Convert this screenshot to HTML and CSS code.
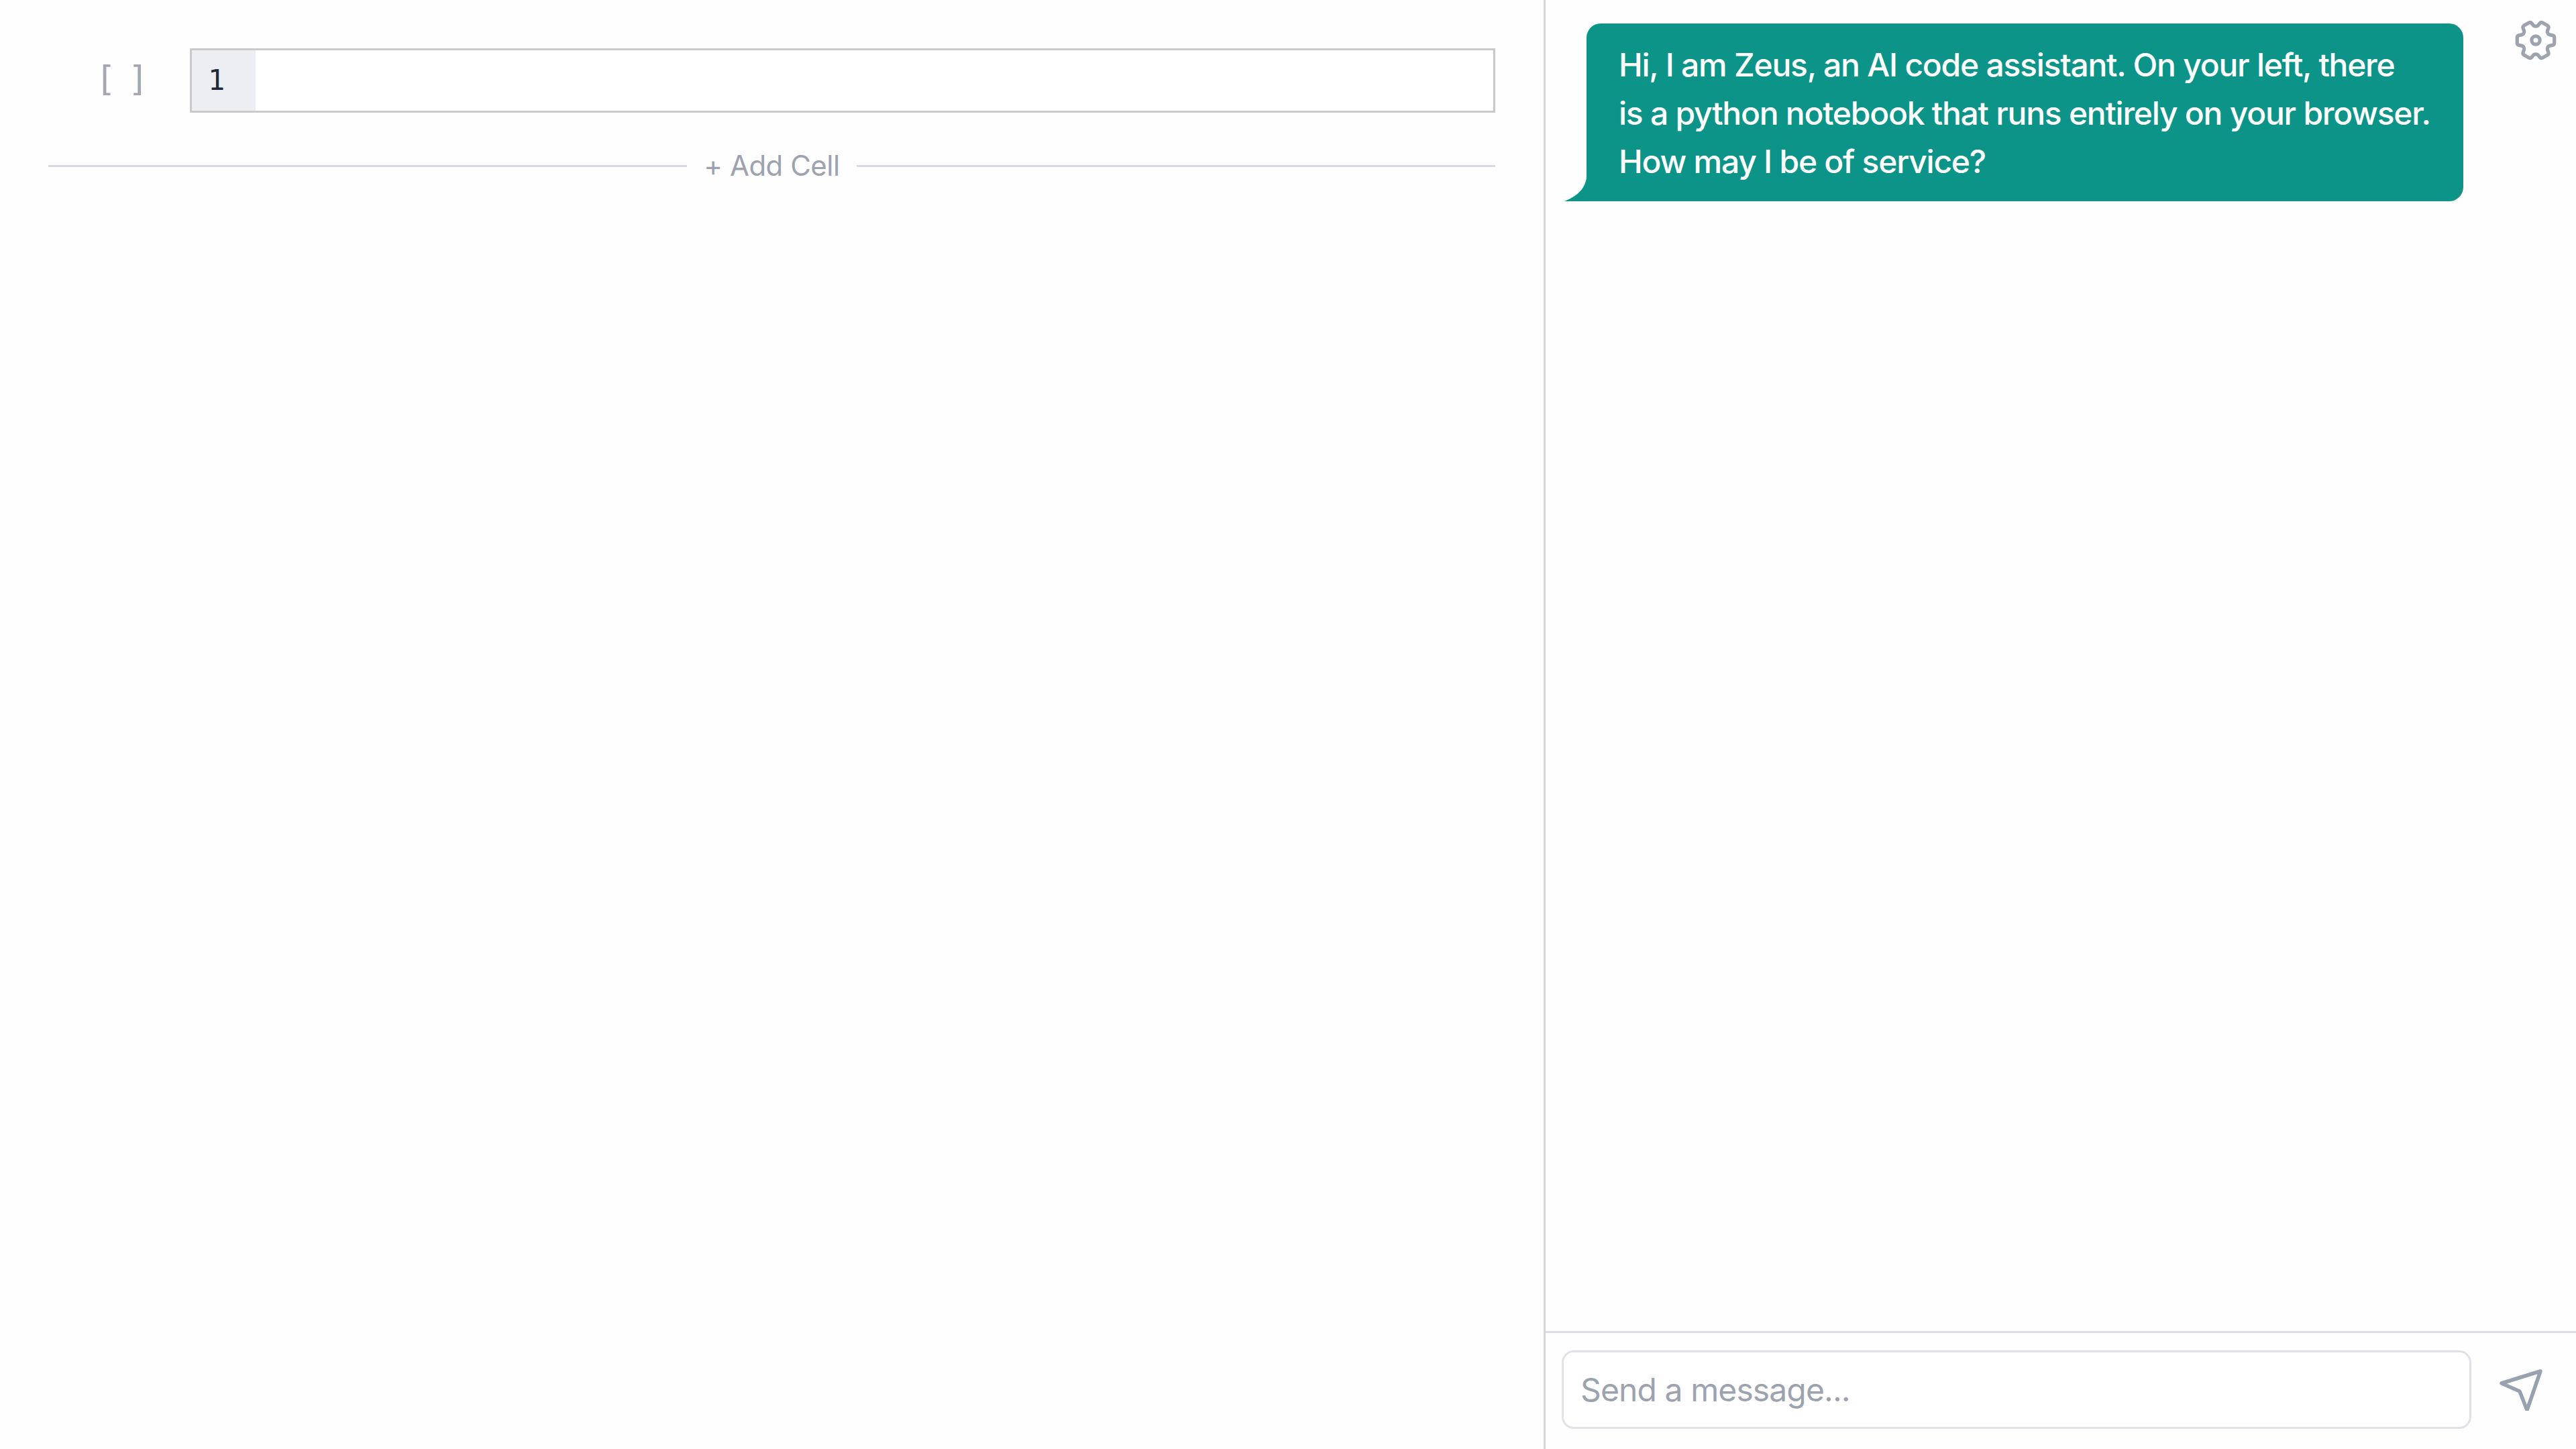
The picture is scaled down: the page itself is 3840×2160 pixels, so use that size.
FILE: index.html
```html
<!doctype html>
<html>
<head>
  <meta charset="utf-8">
  <title>Zeus</title>
  <link rel="stylesheet" href="styles.css">
</head>
<body>
  <div class="notebook">
    <div class="cell">
      <div class="prompt">[ ]</div>
      <div class="editor">
        <div class="gutter">1</div>
        <div class="code"></div>
      </div>
    </div>
    <div class="addCell">
      <div class="rule"></div>
      <span class="addLabel">+ Add Cell</span>
      <div class="rule"></div>
    </div>
  </div>

  <div class="chat">
    <div class="messages">
      <div class="bubble">
        <svg class="tail" viewBox="0 0 34 42"><path d="M34 0C33 17 26 32 0 42H34Z"/></svg>
        Hi, I am Zeus, an AI code assistant. On your left, there<br>
        is a python notebook that runs entirely on your browser.<br>
        How may I be of service?
      </div>
      <svg class="gear" viewBox="0 0 24 24" fill="none" stroke="currentColor" stroke-width="1.7" stroke-linecap="round" stroke-linejoin="round">
        <g transform="rotate(90 12 12)">
          <path d="M9.594 3.94c.09-.542.56-.94 1.11-.94h2.593c.55 0 1.02.398 1.11.94l.213 1.281c.063.374.313.686.645.87.074.04.147.083.22.127.324.196.72.257 1.075.124l1.217-.456a1.125 1.125 0 011.37.49l1.296 2.247a1.125 1.125 0 01-.26 1.431l-1.003.827c-.293.24-.438.613-.431.992a6.759 6.759 0 010 .255c-.007.378.138.75.43.99l1.005.828c.424.35.534.954.26 1.43l-1.298 2.247a1.125 1.125 0 01-1.369.491l-1.217-.456c-.355-.133-.75-.072-1.076.124a6.57 6.57 0 01-.22.128c-.331.183-.581.495-.644.869l-.213 1.28c-.09.543-.56.941-1.11.941h-2.594c-.55 0-1.02-.398-1.11-.94l-.213-1.281c-.062-.374-.312-.686-.644-.87a6.52 6.52 0 01-.22-.127c-.325-.196-.72-.257-1.076-.124l-1.217.456a1.125 1.125 0 01-1.369-.49l-1.297-2.247a1.125 1.125 0 01.26-1.431l1.004-.827c.292-.24.437-.613.43-.992a6.932 6.932 0 010-.255c.007-.378-.138-.75-.43-.99l-1.004-.828a1.125 1.125 0 01-.26-1.43l1.297-2.247a1.125 1.125 0 011.37-.491l1.216.456c.356.133.751.072 1.076-.124.072-.044.146-.087.22-.128.332-.183.582-.495.644-.869l.214-1.281z"/>
          <circle cx="12" cy="12" r="2"/>
        </g>
      </svg>
    </div>
    <div class="composer">
      <input class="messageInput" type="text" placeholder="Send a message...">
      <svg class="send" viewBox="0 0 64 64" fill="none" stroke="currentColor" stroke-width="5.5" stroke-linejoin="round" stroke-linecap="round">
        <path d="M3 23L61 5L41 63L30 35Z"/>
      </svg>
    </div>
  </div>
</body>
</html>
```
FILE: styles.css
```css
html, body {
  height: 100%;
}
body {
  margin: 0;
  display: flex;
  background: #fefefe;
  font-family: Inter, "Liberation Sans", sans-serif;
  overflow: hidden;
}

/* notebook side */
.notebook {
  width: 2304px;
  box-sizing: border-box;
  padding: 72px 72px 0 72px;
  border-right: 3px solid #d4d5d8;
}
.cell {
  display: flex;
}
.prompt {
  width: 211px;
  padding: 18px 0 0 70px;
  box-sizing: border-box;
  font-family: "DejaVu Sans Mono", monospace;
  font-size: 52px;
  line-height: 54px;
  letter-spacing: -7px;
  color: #a3a9b4;
}
.editor {
  flex: 1;
  display: flex;
  height: 96px;
  box-sizing: border-box;
  border: 3px solid #c9c9c9;
  background: #fff;
}
.gutter {
  width: 95px;
  box-sizing: border-box;
  padding: 0 0 0 24px;
  background: #eceef3;
  font-family: "DejaVu Sans Mono", monospace;
  font-size: 42px;
  line-height: 90px;
  color: #1f2937;
}
.code {
  flex: 1;
}
.addCell {
  display: flex;
  align-items: center;
  gap: 25px;
  margin-top: 54px;
  height: 50px;
}
.rule {
  flex: 1;
  height: 3px;
  background: #d9dbe1;
}
.addLabel {
  font-size: 42px;
  line-height: 50px;
  letter-spacing: -0.5px;
  color: #9ca3af;
}

/* chat side */
.chat {
  flex: 1;
  display: flex;
  flex-direction: column;
}
.messages {
  flex: 1;
  position: relative;
  padding: 35px 168px 0 61px;
}
.bubble {
  position: relative;
  box-sizing: border-box;
  height: 265px;
  padding: 26px 48px 0;
  background: #0d9488;
  color: #fff;
  font-size: 48px;
  font-weight: 500;
  line-height: 72px;
  letter-spacing: -1.25px;
  white-space: nowrap;
  border-radius: 21px 21px 21px 0;
}
.tail {
  position: absolute;
  left: -33px;
  bottom: 0;
  width: 34px;
  height: 42px;
  fill: #0d9488;
}
.gear {
  position: absolute;
  top: 23px;
  right: 23px;
  width: 74px;
  height: 74px;
  color: #9ca3af;
}
.composer {
  display: flex;
  align-items: center;
  height: 176px;
  box-sizing: border-box;
  padding: 27px 0 32px 24px;
  border-top: 3px solid #dcdee3;
}
.messageInput {
  width: 1356px;
  height: 117px;
  box-sizing: border-box;
  padding: 0 25px;
  border: 3px solid #e0e2e7;
  border-radius: 18px;
  background: #fff;
  font-family: inherit;
  font-size: 48px;
  letter-spacing: -0.9px;
  color: #1f2937;
  outline: none;
}
.messageInput::placeholder {
  color: #9ca3af;
  opacity: 1;
}
.send {
  width: 64px;
  height: 64px;
  margin-left: 42px;
  color: #98a1b0;
}
```
